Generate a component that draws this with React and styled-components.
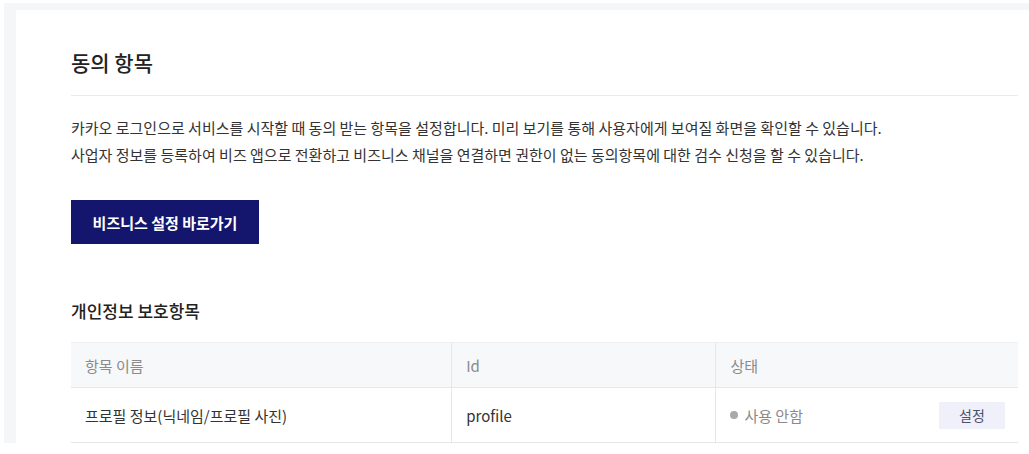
import React from 'react';
import styled, { createGlobalStyle } from 'styled-components';

const GlobalStyle = createGlobalStyle`
  html, body {
    margin: 0;
    padding: 0;
    background: #fff;
  }
  body {
    font-family: "Noto Sans CJK KR", "Noto Sans", sans-serif;
    color: #333;
    overflow: hidden;
  }
`;

const columns = [
  ['항목 이름', '40.2%'],
  ['Id', '27.9%'],
  ['상태', '31.9%'],
];

const items = [
  { name: '프로필 정보(닉네임/프로필 사진)', id: 'profile', status: '사용 안함' },
];

const App = () => (
  <>
    <GlobalStyle />
    <Frame>
      <Panel>
        <Title>동의 항목</Title>
        <Divider />
        <Description>
          카카오 로그인으로 서비스를 시작할 때 동의 받는 항목을 설정합니다. 미리 보기를 통해 사용자에게 보여질 화면을 확인할 수 있습니다.
          <br />
          사업자 정보를 등록하여 비즈 앱으로 전환하고 비즈니스 채널을 연결하면 권한이 없는 동의항목에 대한 검수 신청을 할 수 있습니다.
        </Description>
        <PrimaryButton type="button">비즈니스 설정 바로가기</PrimaryButton>
        <SubTitle>개인정보 보호항목</SubTitle>
        <Table>
          <colgroup>
            {columns.map(([label, width]) => (
              <col key={label} style={{ width }} />
            ))}
          </colgroup>
          <thead>
            <tr>
              {columns.map(([label]) => (
                <HeadCell key={label}>{label}</HeadCell>
              ))}
            </tr>
          </thead>
          <tbody>
            {items.map((item) => (
              <tr key={item.id}>
                <Cell>{item.name}</Cell>
                <Cell>{item.id}</Cell>
                <Cell>
                  <StatusWrap>
                    <Status>
                      <Dot />
                      {item.status}
                    </Status>
                    <SmallButton type="button">설정</SmallButton>
                  </StatusWrap>
                </Cell>
              </tr>
            ))}
          </tbody>
        </Table>
      </Panel>
    </Frame>
  </>
);

export default App;

const Frame = styled.div`
  margin: 3px 0 0 4px;
  padding: 7px 0 0 12px;
  height: 433px;
  background: #f5f6f8;
  overflow: hidden;
`;

const Panel = styled.section`
  background: #fff;
  padding: 37px 11px 0 55px;
  min-height: 500px;
`;

const Title = styled.h2`
  margin: 0;
  font-size: 21px;
  line-height: 30px;
  font-weight: 500;
  color: #222;
`;

const Divider = styled.hr`
  margin: 18px 0 0;
  border: 0;
  height: 1px;
  background: #e9eaed;
`;

const Description = styled.p`
  margin: 18px 0 0;
  font-size: 15px;
  line-height: 27px;
  color: #333;
`;

const PrimaryButton = styled.button`
  display: block;
  margin-top: 32px;
  width: 188px;
  height: 44px;
  border: 0;
  background: #14166e;
  color: #fff;
  font-family: inherit;
  font-size: 15px;
  font-weight: 700;
  cursor: pointer;
`;

const SubTitle = styled.h3`
  margin: 55px 0 0;
  font-size: 17px;
  line-height: 24px;
  font-weight: 500;
  color: #222;
`;

const Table = styled.table`
  margin-top: 19px;
  width: 100%;
  border-collapse: collapse;
  table-layout: fixed;
  font-size: 15px;
`;

const HeadCell = styled.th`
  height: 44px;
  padding: 0 14px;
  text-align: left;
  font-weight: 400;
  color: #8a8a8a;
  background: #f7f8fa;
  border-top: 1px solid #eeeff2;
  border-bottom: 1px solid #e6e7ea;
  border-left: 1px solid #e6e7ea;
  &:first-child {
    border-left: 0;
  }
`;

const Cell = styled.td`
  height: 54px;
  padding: 0 13px 0 14px;
  color: #333;
  border-bottom: 1px solid #e6e7ea;
  border-left: 1px solid #e6e7ea;
  &:first-child {
    border-left: 0;
  }
`;

const StatusWrap = styled.div`
  display: flex;
  align-items: center;
  justify-content: space-between;
`;

const Status = styled.span`
  display: flex;
  align-items: center;
  gap: 6px;
  color: #8a8a8a;
`;

const Dot = styled.span`
  width: 8px;
  height: 8px;
  border-radius: 50%;
  background: #a9a9a9;
`;

const SmallButton = styled.button`
  width: 66px;
  height: 27px;
  border: 0;
  background: #eff0fa;
  color: #4d4f6b;
  font-family: inherit;
  font-size: 14px;
  cursor: pointer;
`;
